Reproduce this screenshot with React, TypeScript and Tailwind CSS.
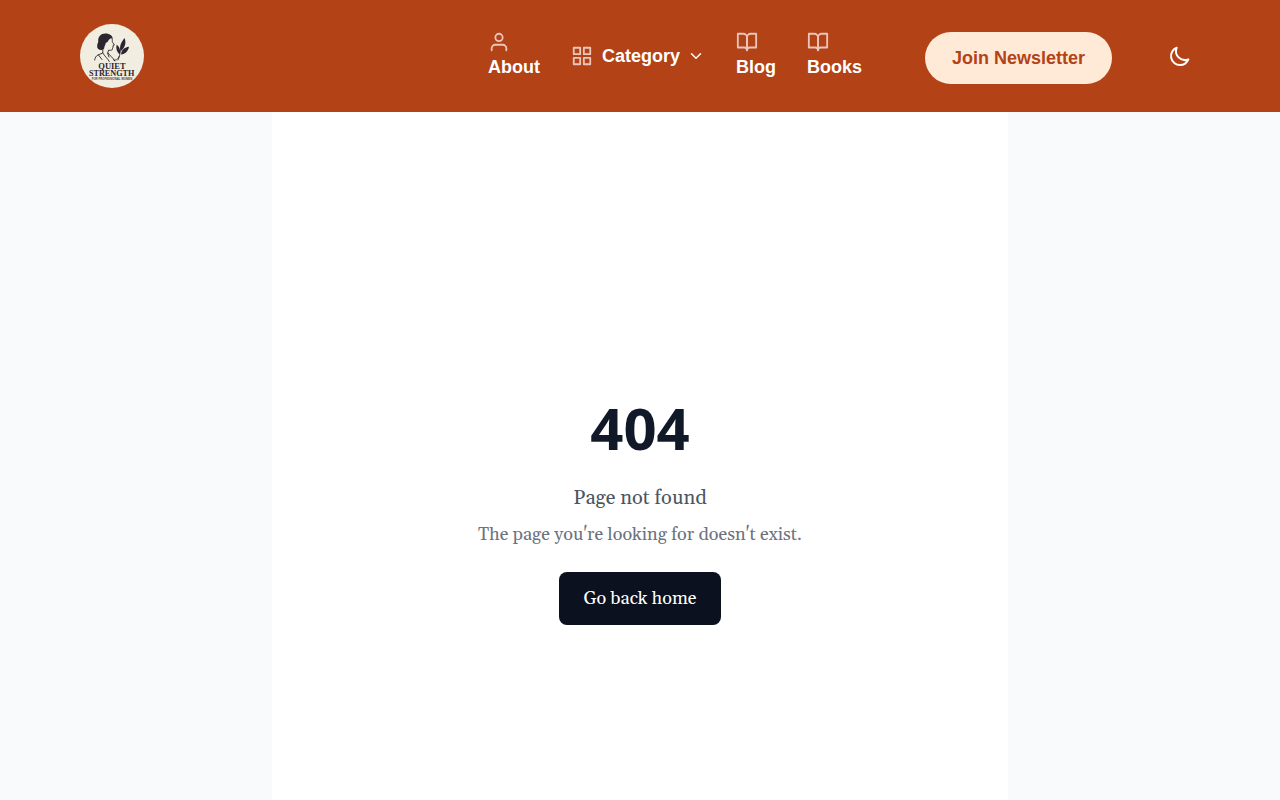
import type { ReactNode } from "react";

const strokeProps = {
  viewBox: "0 0 24 24",
  fill: "none",
  stroke: "currentColor",
  strokeWidth: 2,
  strokeLinecap: "round" as const,
  strokeLinejoin: "round" as const,
  "aria-hidden": true,
};

function UserIcon() {
  return (
    <svg {...strokeProps} className="h-[22px] w-[22px] opacity-70">
      <path d="M20 21v-2a4 4 0 0 0-4-4H8a4 4 0 0 0-4 4v2" />
      <circle cx="12" cy="7" r="4" />
    </svg>
  );
}

function GridIcon() {
  return (
    <svg {...strokeProps} className="h-[22px] w-[22px] opacity-70">
      <rect x="3" y="3" width="7" height="7" />
      <rect x="14" y="3" width="7" height="7" />
      <rect x="14" y="14" width="7" height="7" />
      <rect x="3" y="14" width="7" height="7" />
    </svg>
  );
}

function BookIcon() {
  return (
    <svg {...strokeProps} className="h-[22px] w-[22px] opacity-70">
      <path d="M2 3h6a4 4 0 0 1 4 4v14a3 3 0 0 0-3-3H2z" />
      <path d="M22 3h-6a4 4 0 0 0-4 4v14a3 3 0 0 1 3-3h7z" />
    </svg>
  );
}

function Logo() {
  return (
    <svg viewBox="0 0 64 64" className="h-16 w-16" role="img" aria-label="Quiet Strength for professional women">
      <circle cx="32" cy="32" r="32" fill="#f2ede1" />
      <g fill="#2b2530">
        <path d="M18.300 18c-.8-5 2.700-8.400 7-8.400 3.800 0 6.700 1.700 7.300 4.400-2 .2-3.300.9-4.100 2.300-.5 1.300-1.500 2.300-2.800 2.800-.2 1.600-.6 2.700-1.400 3.600.5 1.900-.9 3.300-3.100 3.200-2.700 0-4.400-1.700-4-4 .1-1.700.5-2.900 1.100-3.900z" />
        <path d="M40.500 27.500c-1.200-4.500 0-8.800 4.100-13.500 1.900 5.400.4 9.700-4.100 13.500zM39.800 30.500c-3-2.300-4.100-5.500-3.200-9.700 3 2 4.200 5.500 3.200 9.700zM41 30.500c.5-4.300 3-7 8-7.700-.8 4.600-3.700 7.200-8 7.700z" />
      </g>
      <g fill="none" stroke="#2b2530" strokeLinecap="round" strokeLinejoin="round">
        <path
          strokeWidth=".9"
          d="M32 14c.7 2-.1 3 .6 4.300l1.800 2.700-1.500.7.200 1.500-.6 1c.4 1.800-.8 2.400-4 2l-.6 2.500c2 3 5 5 7 8.300M22.800 26v3l-4.800 2c-2 1-3 2.500-3.300 5M22.800 29c2 3.500 4.500 5 6.500 8.500M18.500 31l3.500 4.500M27.500 29l1.500 4"
        />
        <path strokeWidth=".8" d="M40.300 27c-.3 3-.8 6-2.300 9M33.500 36c2.500.8 4.500-.6 5.800-4" />
      </g>
      <g fill="#2b2530" textAnchor="middle" fontFamily="Liberation Serif, serif" fontWeight="700">
        <text x="32" y="44.700" fontSize="8.500">QUIET</text>
        <text x="31.700" y="51.800" fontSize="8.200">STRENGTH</text>
      </g>
      <text x="32" y="55.800" fontSize="2.800" textAnchor="middle" fontWeight="700" fontFamily="Liberation Sans, sans-serif" fill="#4a444b">
        FOR PROFESSIONAL WOMEN
      </text>
    </svg>
  );
}

function NavLink({ icon, children }: { icon: ReactNode; children: ReactNode }) {
  return (
    <a href="#" className="flex flex-col">
      {icon}
      <span className="leading-7">{children}</span>
    </a>
  );
}

export default function App() {
  return (
    <div className="flex min-h-screen flex-col bg-[#f9fafb] font-[Georgia,Gelasio,'Liberation_Serif',serif] text-lg">
      <header className="flex h-28 items-center justify-between bg-[#b34216] px-20 font-['Liberation_Sans',Arial,sans-serif] font-bold text-white">
        <a href="#">
          <Logo />
        </a>
        <div className="flex items-center">
          <nav className="flex items-center gap-[31px]">
            <NavLink icon={<UserIcon />}>About</NavLink>
            <button type="button" className="flex items-center gap-[9px]">
              <GridIcon />
              <span className="flex items-center gap-[7px] leading-7">
                Category
                <svg {...strokeProps} className="h-[18px] w-[18px]">
                  <path d="m6 9 6 6 6-6" />
                </svg>
              </span>
            </button>
            <NavLink icon={<BookIcon />}>Blog</NavLink>
            <NavLink icon={<BookIcon />}>Books</NavLink>
          </nav>
          <a href="#" className="mt-1 ml-[63px] rounded-full bg-[#ffead8] px-[27px] py-3 leading-7 text-[#b34216]">
            Join Newsletter
          </a>
          <button type="button" aria-label="Toggle dark mode" className="ml-12 flex w-10 justify-center">
            <svg {...strokeProps} className="h-6 w-6">
              <path d="M20.354 15.354A9 9 0 0 1 8.646 3.646 9.003 9.003 0 0 0 12 21a9.003 9.003 0 0 0 8.354-5.646z" />
            </svg>
          </button>
        </div>
      </header>
      <main className="mx-auto flex w-full max-w-[736px] flex-1 flex-col bg-white pt-[274px] text-center">
        <h1 className="font-['Open_Sans','Noto_Sans',sans-serif] text-[58px] leading-[84px] font-bold text-[#111827]">404</h1>
        <p className="mt-3 text-xl leading-8 text-[#4b5563]">Page not found</p>
        <p className="mt-[7px] leading-7 text-[#6b7280]">The page you're looking for doesn't exist.</p>
        <div className="mt-[23px]">
          <a href="#" className="inline-block rounded-lg bg-[#0b111e] px-6 py-3 leading-[29px] text-white">
            Go back home
          </a>
        </div>
      </main>
    </div>
  );
}
